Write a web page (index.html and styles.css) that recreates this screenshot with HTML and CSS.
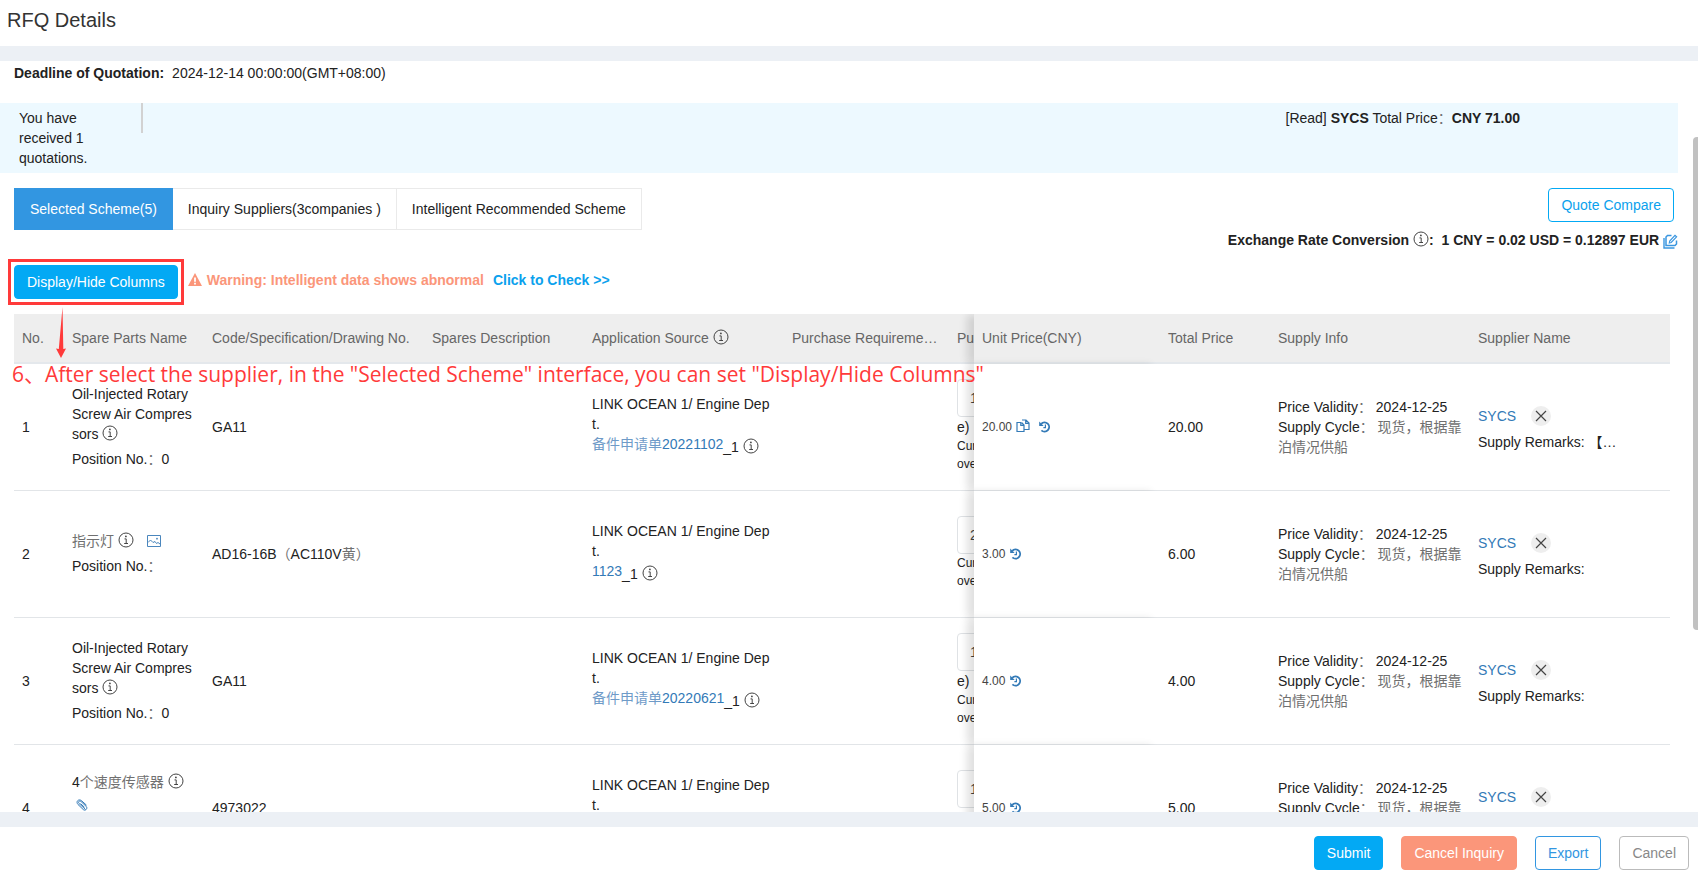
FILE: index.html
```html
<!DOCTYPE html>
<html lang="en">
<head>
<meta charset="utf-8">
<title>RFQ Details</title>
<link rel="stylesheet" href="styles.css">
</head>
<body>
<svg class="defs" aria-hidden="true">
  <symbol id="info" viewBox="0 0 16 16"><circle cx="8" cy="8" r="7" fill="none" stroke="currentColor"/><path d="M6.500 6.900H8.200V11.400M6.200 11.500H10" fill="none" stroke="currentColor"/><circle cx="7.900" cy="4.400" r=".9" fill="currentColor"/></symbol>
  <symbol id="history" viewBox="0 0 12 12"><path d="M2.200 2.800A4.600 4.600 0 1 1 2.400 9.400" fill="none" stroke="currentColor" stroke-width="1.900"/><path d="M.2.6V5.100H4.700Z" fill="currentColor"/><path d="M6.400 3.600V6.600H4.400" fill="none" stroke="currentColor" stroke-width="1.200"/></symbol>
  <symbol id="copy" viewBox="0 0 14 14"><path d="M5 3.500H1V12.500H8V10.500M6 1H10L13 4V10.500H8V6L5.500 3.500M9.700 1V4.300H13M4.800 3.500V6.300H8" fill="none" stroke="currentColor" stroke-width="1.200"/></symbol>
  <symbol id="image" viewBox="0 0 14 12"><path d="M.5.5H13.500V11.500H.5ZM1 7.500L3.500 5L6 7.500L8 6.500L9.500 8.500L11 7.500L13 9" fill="none" stroke="currentColor"/><circle cx="10" cy="3.700" r=".9" fill="currentColor"/></symbol>
  <symbol id="clip" viewBox="0 0 12 12"><path d="M9.500 10.500L3 4.500C1.800 3 3.200 1.200 4.800 2.300L10.300 7.500C12 9.500 9.300 12.300 7.300 10.600L2 5.500C-.5 2.500 2.500-.3 5.300 1.500L10.500 6.200M8.500 8.300L4.500 4.600" fill="none" stroke="currentColor"/></symbol>
  <symbol id="close" viewBox="0 0 20 20"><path d="M5 5L15 15M15 5L5 15" fill="none" stroke="currentColor" stroke-width="1.200"/></symbol>
</svg>

<div class="page">
  <header class="page-header"><h1>RFQ Details</h1></header>

  <main class="content">
    <p class="deadline"><b>Deadline of Quotation:</b><span>2024-12-14 00:00:00(GMT+08:00)</span></p>

    <section class="notice">
      <p class="notice-count">You have received 1 quotations.</p>
      <i class="notice-line"></i>
      <p class="notice-price">[Read] <b>SYCS</b> Total Price<span class="cjk" lang="zh-CN">：</span><b>CNY 71.00</b></p>
    </section>

    <section class="toolbar">
      <nav class="tabs">
        <button class="tab tab-active">Selected Scheme(5)</button>
        <button class="tab">Inquiry Suppliers(3companies )</button>
        <button class="tab">Intelligent Recommended Scheme</button>
      </nav>
      <div class="rates">
        <button class="btn btn-line">Quote Compare</button>
        <p class="rate-text">Exchange Rate Conversion <svg class="icon-info"><use href="#info"/></svg>:&nbsp; 1 CNY = 0.02 USD = 0.12897 EUR
          <svg class="icon-edit" viewBox="0 0 15 15"><path d="M8.500 1.500H4.500L3 3V11.500H12L13.500 10V6.500" fill="none" stroke="currentColor" stroke-width="1.500"/><path d="M1 4V14H11.500" fill="none" stroke="currentColor" stroke-width="1.400"/><path d="M6.300 9L6.700 7L12 1.300L13.600 2.800L8.200 8.500Z" fill="none" stroke="currentColor" stroke-width="1.200"/></svg></p>
      </div>
    </section>

    <section class="actions">
      <div class="marked">
        <button class="btn btn-primary">Display/Hide Columns</button>
        <i class="mark-frame"></i>
        <svg class="mark-arrow" viewBox="0 0 12 52"><path d="M7.500 0L8.300 42L11 41.500L6 51L1 41.500L3.800 42Z" fill="#ff3a3a"/></svg>
      </div>
      <p class="warning"><svg class="icon-warn" viewBox="0 0 14 13"><path d="M7 0L14 13H0Z" fill="currentColor"/><path d="M7 4.500V8.800M7 9.800V11.500" stroke="#fff" stroke-width="1.800"/></svg>Warning: Intelligent data shows abnormal<a href="#">Click to Check &gt;&gt;</a></p>
    </section>

    <section class="table-area">
      <table class="parts">
        <colgroup><col class="c-no"><col class="c-name"><col class="c-code"><col class="c-desc"><col><col class="c-req"><col class="c-pur"><col class="c-unit"><col class="c-total"><col class="c-info"><col class="c-info"></colgroup>
        <thead>
          <tr><th>No.</th><th>Spare Parts Name</th><th class="nowrap">Code/Specification/Drawing No.</th><th>Spares Description</th><th>Application Source <svg class="icon-info"><use href="#info"/></svg></th><th class="nowrap">Purchase Requireme…</th><th class="clip">Pu</th><th class="unit">Unit Price(CNY)</th><th>Total Price</th><th>Supply Info</th><th>Supplier Name</th></tr>
        </thead>
        <tbody>
          <tr>
            <td>1</td>
            <td class="break">Oil-Injected Rotary Screw Air Compressors <svg class="icon-info"><use href="#info"/></svg><p class="position">Position No.<span class="cjk" lang="zh-CN">：</span>0</p></td>
            <td>GA11</td><td></td>
            <td class="break">LINK OCEAN 1/ Engine Dept.<p class="source"><a href="#" lang="zh-CN"><span class="cjk">备件申请单</span>20221102</a>_1 <svg class="icon-info"><use href="#info"/></svg></p></td>
            <td></td>
            <td class="clip"><input class="qty" value="1" aria-label="Quantity 1"><p>e)</p><small>Cur<br>over</small></td>
            <td class="unit">20.00 <svg class="icon-copy"><use href="#copy"/></svg><svg class="icon-history"><use href="#history"/></svg></td>
            <td>20.00</td>
            <td>Price Validity<span class="cjk" lang="zh-CN">：</span> 2024-12-25<br>Supply Cycle<span class="cjk" lang="zh-CN">： 现货，根据靠泊情况供船</span></td>
            <td><p class="supplier"><a href="#">SYCS</a><button class="remove" aria-label="Remove"><svg><use href="#close"/></svg></button></p><p class="remarks">Supply Remarks: <span lang="zh-CN">【</span>…</p></td>
          </tr>
          <tr>
            <td>2</td>
            <td><span class="cjk" lang="zh-CN">指示灯</span> <svg class="icon-info"><use href="#info"/></svg><svg class="icon-image"><use href="#image"/></svg><p class="position">Position No.<span class="cjk" lang="zh-CN">：</span></p></td>
            <td>AD16-16B<span class="cjk" lang="zh-CN">（</span>AC110V<span class="cjk" lang="zh-CN">黄）</span></td><td></td>
            <td class="break">LINK OCEAN 1/ Engine Dept.<p class="source"><a href="#">1123</a>_1 <svg class="icon-info"><use href="#info"/></svg></p></td>
            <td></td>
            <td class="clip"><input class="qty" value="2" aria-label="Quantity 2"><small>Cur<br>over</small></td>
            <td class="unit">3.00 <svg class="icon-history"><use href="#history"/></svg></td>
            <td>6.00</td>
            <td>Price Validity<span class="cjk" lang="zh-CN">：</span> 2024-12-25<br>Supply Cycle<span class="cjk" lang="zh-CN">： 现货，根据靠泊情况供船</span></td>
            <td><p class="supplier"><a href="#">SYCS</a><button class="remove" aria-label="Remove"><svg><use href="#close"/></svg></button></p><p class="remarks">Supply Remarks:</p></td>
          </tr>
          <tr>
            <td>3</td>
            <td class="break">Oil-Injected Rotary Screw Air Compressors <svg class="icon-info"><use href="#info"/></svg><p class="position">Position No.<span class="cjk" lang="zh-CN">：</span>0</p></td>
            <td>GA11</td><td></td>
            <td class="break">LINK OCEAN 1/ Engine Dept.<p class="source"><a href="#" lang="zh-CN"><span class="cjk">备件申请单</span>20220621</a>_1 <svg class="icon-info"><use href="#info"/></svg></p></td>
            <td></td>
            <td class="clip"><input class="qty" value="1" aria-label="Quantity 3"><p>e)</p><small>Cur<br>over</small></td>
            <td class="unit">4.00 <svg class="icon-history"><use href="#history"/></svg></td>
            <td>4.00</td>
            <td>Price Validity<span class="cjk" lang="zh-CN">：</span> 2024-12-25<br>Supply Cycle<span class="cjk" lang="zh-CN">： 现货，根据靠泊情况供船</span></td>
            <td><p class="supplier"><a href="#">SYCS</a><button class="remove" aria-label="Remove"><svg><use href="#close"/></svg></button></p><p class="remarks">Supply Remarks:</p></td>
          </tr>
          <tr>
            <td>4</td>
            <td>4<span class="cjk" lang="zh-CN">个速度传感器</span> <svg class="icon-info"><use href="#info"/></svg><p class="attachment"><svg class="icon-clip"><use href="#clip"/></svg></p><p class="position">Position No.<span class="cjk" lang="zh-CN">：</span></p></td>
            <td>4973022</td><td></td>
            <td class="break">LINK OCEAN 1/ Engine Dept.<p class="source"><a href="#">1123</a>_1</p></td>
            <td></td>
            <td class="clip"><input class="qty" value="1" aria-label="Quantity 4"><small>Cur<br>over</small></td>
            <td class="unit">5.00 <svg class="icon-history"><use href="#history"/></svg></td>
            <td>5.00</td>
            <td>Price Validity<span class="cjk" lang="zh-CN">：</span> 2024-12-25<br>Supply Cycle<span class="cjk" lang="zh-CN">： 现货，根据靠泊情况供船</span></td>
            <td><p class="supplier"><a href="#">SYCS</a><button class="remove" aria-label="Remove"><svg><use href="#close"/></svg></button></p><p class="remarks">Supply Remarks:</p></td>
          </tr>
        </tbody>
      </table>
      <p class="annotation">6<span lang="zh-CN">、</span>After select the supplier, in the "Selected Scheme" interface, you can set "Display/Hide Columns"</p>
    </section>
  </main>

  <footer class="page-footer">
    <button class="btn btn-primary">Submit</button>
    <button class="btn btn-danger">Cancel Inquiry</button>
    <button class="btn btn-export">Export</button>
    <button class="btn btn-plain">Cancel</button>
  </footer>
  <i class="scroll-thumb"></i>
</div>
</body>
</html>
```

FILE: styles.css
```css
* { box-sizing: border-box; }

body {
  margin: 0;
  color: #222;
  background: #fff;
  font: 14px/20px "Liberation Sans", Arial, "Noto Sans CJK SC", sans-serif;
}

h1, p { margin: 0; }
a { color: #337ab7; text-decoration: none; }
button, input { font: inherit; }
button { cursor: pointer; }
.defs { position: absolute; width: 0; height: 0; }
.cjk { color: #707070; }
a .cjk { color: #6f9bc8; }

.page {
  position: relative;
  display: flex;
  flex-direction: column;
  height: 100vh;
  overflow: hidden;
}

.page-header { padding: 8px 7px 14px; }
.page-header h1 { color: #333; font-size: 20px; line-height: 24px; font-weight: 400; }

.content {
  flex: 1;
  min-height: 0;
  overflow: hidden;
  padding-right: 20px;
  border-top: 15px solid #ecf0f5;
  border-bottom: 15px solid #ecf0f5;
}

.deadline { display: flex; gap: 8px; padding: 2px 14px 20px; }

.notice { display: flex; align-items: flex-start; height: 70px; background: #edf9ff; }
.notice-count { width: 122px; padding: 5px 30px 5px 19px; }
.notice-line { width: 2px; height: 30px; margin-left: 19px; background: #d2d2d2; }
.notice-price { margin-left: auto; padding: 5px 158px 5px 0; }

.toolbar { display: flex; justify-content: space-between; align-items: flex-start; padding: 15px 0 15px 14px; }
.tabs { display: flex; }
.tab {
  height: 42px;
  padding: 0 15px;
  border: 1px solid #eaeaea;
  border-left-width: 0;
  background: #fff;
  color: #222;
}
.tab-active { padding-left: 16px; border-color: #3296e1; background: #3296e1; color: #fff; }

.rates { display: flex; flex-direction: column; align-items: flex-end; gap: 8px; }
.rates .btn { margin-right: 4px; }
.rate-text { font-weight: 700; }

.btn {
  height: 34px;
  padding: 0 12px;
  border: 1px solid;
  border-radius: 4px;
  background: #fff;
}
.btn-line { color: #0ba1ed; border-color: #03a9f4; }
.btn-primary { color: #fff; background: #03a9f4; border-color: #03a9f4; }
.btn-danger { color: #fff; background: #fb967a; border-color: #fb967a; }
.btn-export { color: #3296e1; }
.btn-plain { color: #888; border-color: #bbb; }

.actions { display: flex; align-items: flex-start; gap: 10px; padding: 0 14px 15px; }
.marked { position: relative; }
.marked .btn { display: block; }
.mark-frame { position: absolute; inset: -6px; border: 3px solid #ff3a3a; pointer-events: none; }
.mark-arrow { position: absolute; z-index: 3; left: 41px; top: 42px; width: 12px; height: 52px; }
.warning { color: #fb967a; font-weight: 700; line-height: 30px; }
.warning a { margin-left: 9px; color: #0ba1ed; }

.table-area { position: relative; overflow: hidden; padding: 0 8px 0 14px; }
.parts { width: 100%; table-layout: fixed; border-collapse: separate; border-spacing: 0; }
.c-no { width: 50px; }
.c-name { width: 140px; }
.c-code { width: 220px; }
.c-desc { width: 160px; }
.c-req { width: 165px; }
.c-pur { width: 25px; }
.c-unit { width: 186px; }
.c-total { width: 110px; }
.c-info { width: 200px; }

.parts th {
  height: 50px;
  padding: 0 8px;
  border-bottom: 2px solid #e4e8ec;
  background: #eee;
  color: #666;
  font-weight: 400;
  text-align: left;
}
.parts td { height: 127px; padding: 0 8px; border-bottom: 1px solid #e2e5e8; }
.parts td:nth-child(2), .parts td:nth-child(5), .parts td:nth-child(7) { padding-bottom: 2px; }
.break { word-break: break-all; }
.parts .nowrap { white-space: nowrap; }
.parts .clip { padding-right: 0; overflow: hidden; white-space: nowrap; }
.parts .unit { position: relative; box-shadow: -8px 0 8px -1px rgba(0, 0, 0, .12); }
.parts td.unit { background: #fff; color: #444; font-size: 12px; }

.position { margin-top: 5px; }
.attachment { height: 25px; padding-left: 4px; }
.source { padding-bottom: 2px; }
.source a { display: inline-block; vertical-align: 3px; }
.qty {
  display: block;
  width: 80px;
  height: 38px;
  padding: 0 12px;
  border: 1px solid #dfe2e5;
  border-radius: 4px;
  background: #fff;
  color: #444;
}
.clip small { display: block; font-size: 12px; line-height: 18px; }

.supplier { display: flex; align-items: center; gap: 15px; height: 20px; margin: 4px 0 6px; }
.remove { width: 20px; height: 20px; padding: 0; border: 0; border-radius: 50%; background: #eee; color: #444; }
.remove svg { display: block; width: 20px; height: 20px; }
.remarks { white-space: nowrap; }

.icon-info { width: 16px; height: 16px; vertical-align: -2px; color: #444; }
.icon-edit { width: 15px; height: 15px; vertical-align: -4px; color: #3a96e0; }
.icon-warn { width: 14px; height: 13px; margin-right: 5px; vertical-align: -1px; }
.icon-history { width: 12px; height: 12px; margin-left: 1px; vertical-align: -2px; color: #337ab7; }
.icon-copy { width: 14px; height: 14px; margin: 0 8px 0 1px; vertical-align: -2px; color: #337ab7; }
.icon-image { width: 14px; height: 12px; margin-left: 13px; vertical-align: -1px; color: #4a86bd; }
.icon-clip { width: 12px; height: 12px; margin-top: 7px; color: #337ab7; }

.annotation {
  position: absolute;
  z-index: 3;
  left: 12px;
  top: 45px;
  color: #ff3a3a;
  font: 21px/30px "Open Sans", "Noto Sans CJK SC", sans-serif;
  white-space: nowrap;
}

.page-footer { display: flex; justify-content: flex-end; gap: 18px; padding: 9px 9px 6px; }

.scroll-thumb {
  position: absolute;
  right: 0;
  top: 137px;
  width: 5px;
  height: 493px;
  border-radius: 4px 0 0 4px;
  background: #c1c1c1;
}
```
